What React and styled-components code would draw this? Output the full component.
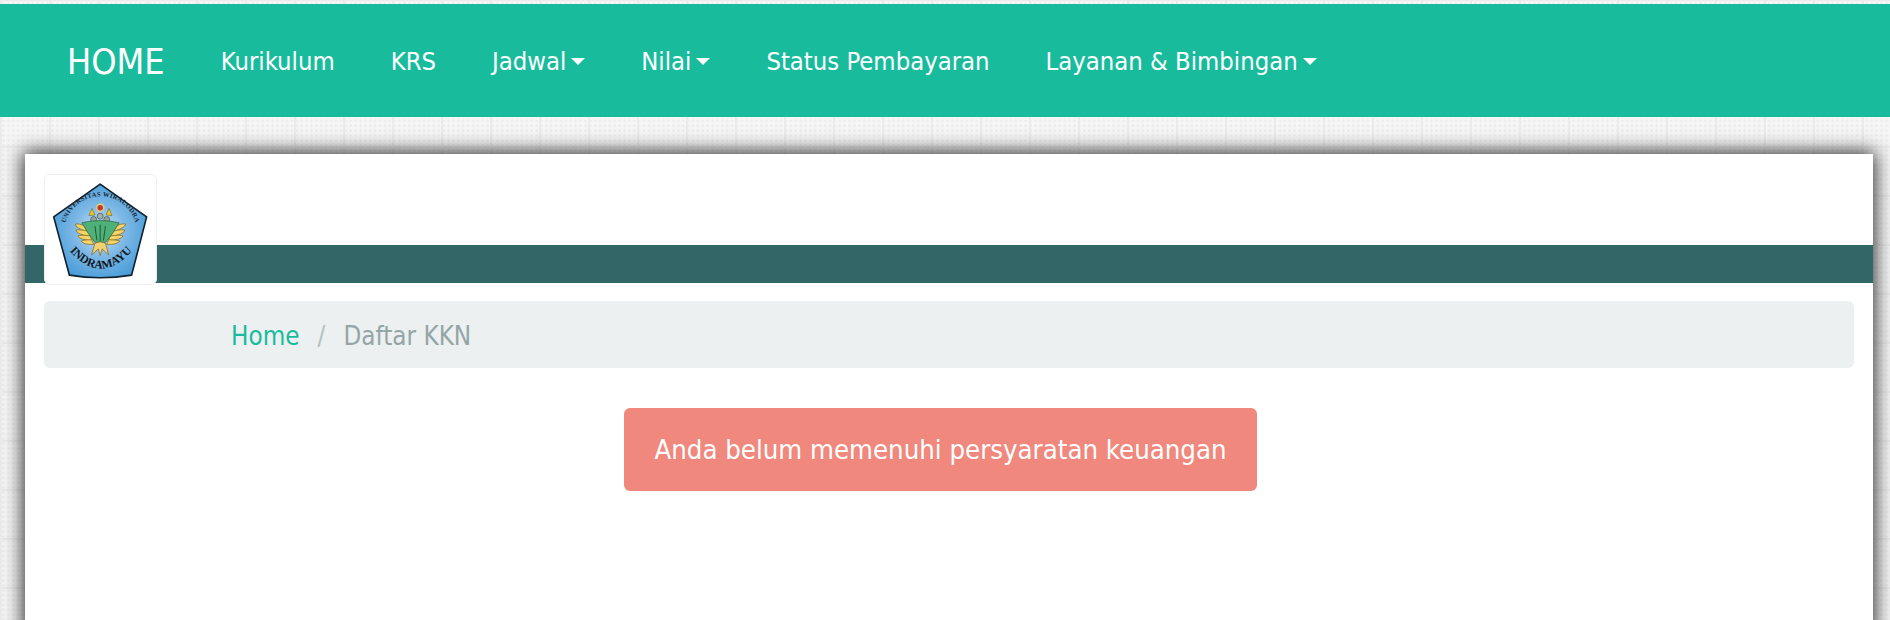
import React from "react";
import styled, { createGlobalStyle } from "styled-components";

const Global = createGlobalStyle`
  html, body { margin: 0; padding: 0; height: 100%; overflow: hidden; }
  body {
    font-family: "DejaVu Sans", "Noto Sans", sans-serif;
    font-stretch: condensed;
    background-color: #f6f6f6;
    background-image:
      linear-gradient(90deg, #ebebeb 0, #ebebeb 2px, transparent 2px),
      linear-gradient(0deg, #ebebeb 0, #ebebeb 2px, transparent 2px),
      radial-gradient(circle, #ececec 1.1px, transparent 1.5px);
    background-size: 49px 49px, 49px 49px, 4.9px 4.9px;
    background-position: 0 0, 0 1px, 1px 1px;
  }
`;

const Page = styled.div`
  padding-top: 4px;
`;

const Navbar = styled.nav`
  display: flex;
  align-items: center;
  height: 113px;
  padding-left: 67px;
  padding-top: 1px;
  box-sizing: border-box;
  background: #18bc9c;
  color: #fff;
`;

const Brand = styled.a`
  font-size: 35.8px;
  margin-right: 28px;
`;

const NavLink = styled.a`
  display: flex;
  align-items: center;
  gap: 5px;
  padding: 0 28px;
  font-size: 25.4px;
`;

const Caret = styled.span`
  width: 0;
  height: 0;
  border-top: 7px solid #fff;
  border-left: 7px solid transparent;
  border-right: 7px solid transparent;
`;

const Card = styled.main`
  position: relative;
  margin: 37px 17px 0 25px;
  min-height: 480px;
  background: #fff;
  box-shadow: 0 0 18px 2px #2c2c2c;
`;

const Header = styled.header`
  padding-top: 91px;
`;

const HeaderBar = styled.div`
  height: 38px;
  background: #336666;
`;

const Logo = styled.div`
  position: absolute;
  left: 19px;
  top: 20px;
  width: 113px;
  height: 111px;
  box-sizing: border-box;
  background: #fff;
  border: 1px solid #ecf0f1;
  border-radius: 6px;
  overflow: hidden;
`;

const Body = styled.div`
  padding: 18px 19px 0;
`;

const Breadcrumb = styled.ol`
  display: flex;
  align-items: center;
  gap: 18px;
  height: 67px;
  box-sizing: border-box;
  margin: 0;
  padding: 3px 0 0 187px;
  list-style: none;
  border-radius: 6px;
  background: #ecf0f1;
  font-size: 25.8px;
  color: #95a5a6;
`;

const Crumb = styled.li`
  color: ${(p) => (p.$link ? "#18bc9c" : "#95a5a6")};
`;

const Separator = styled.li`
  color: #b4c0c1;
`;

const Center = styled.div`
  display: flex;
  justify-content: center;
  margin: 40px 17px 0 0;
`;

const Alert = styled.div`
  display: flex;
  align-items: center;
  height: 83px;
  padding: 0 30px;
  border-radius: 6px;
  background: #f0887e;
  color: #fff;
  font-size: 27.3px;
`;

const Emblem = () => (
  <svg width="111" height="109" viewBox="0 0 338 333">
    <defs>
      <radialGradient id="blue" cx="50%" cy="50%" r="60%">
        <stop offset="0" stopColor="#cfe5f6" />
        <stop offset="0.45" stopColor="#7fb9e6" />
        <stop offset="1" stopColor="#3f97d6" />
      </radialGradient>
      <path id="arcTop" d="M58 176 A110 110 0 0 1 280 176" />
      <path id="arcBottom" d="M66 222 Q170 350 274 222" />
    </defs>
    <path d="M168 28 L310 128 L264 306 Q168 322 74 306 L26 128 Z" fill="url(#blue)" stroke="#10202c" strokeWidth="5" strokeLinejoin="round" />
    <text fontFamily="Liberation Serif, serif" fontWeight="700" fontSize="20" letterSpacing="1" fill="#1b2630">
      <textPath href="#arcTop" startOffset="50%" textAnchor="middle">UNIVERSITAS WIRALODRA</textPath>
    </text>
    <text fontFamily="Liberation Serif, serif" fontWeight="700" fontSize="36" fill="#10161c">
      <textPath href="#arcBottom" startOffset="50%" textAnchor="middle">INDRAMAYU</textPath>
    </text>
    <circle cx="168" cy="100" r="11" fill="#c0392b" stroke="#d9c98a" strokeWidth="5" />
    <path d="M143 102 L152 122 L134 124 Z M195 102 L204 124 L186 122 Z" fill="#f2c81f" stroke="#5d4a10" strokeWidth="1.5" />
    <circle cx="148" cy="136" r="9" fill="#98a59e" stroke="#3f4a45" strokeWidth="2" />
    <circle cx="168" cy="126" r="9" fill="#a4b0aa" stroke="#3f4a45" strokeWidth="2" />
    <circle cx="188" cy="136" r="9" fill="#98a59e" stroke="#3f4a45" strokeWidth="2" />
    <g fill="#f5d468" stroke="#7a5a12" strokeWidth="2">
      <path d="M132 160 Q100 146 92 150 Q92 162 132 174 Z" />
      <path d="M136 172 Q100 166 94 168 Q96 182 138 188 Z" />
      <path d="M138 186 Q106 182 100 186 Q104 198 142 200 Z" />
      <path d="M142 198 Q116 198 110 202 Q118 214 148 212 Z" />
      <path d="M204 160 Q236 146 246 150 Q244 162 204 174 Z" />
      <path d="M200 172 Q236 166 244 168 Q240 182 198 188 Z" />
      <path d="M198 186 Q230 182 238 186 Q232 198 194 200 Z" />
      <path d="M194 198 Q220 198 228 202 Q218 214 188 212 Z" />
    </g>
    <path d="M112 146 Q168 132 226 146 Q206 182 184 206 L152 206 Q132 182 112 146 Z" fill="#4fb078" stroke="#1d5a3a" strokeWidth="2" />
    <path d="M152 156 L158 200 M168 152 L168 204 M184 156 L178 200" stroke="#1d5a3a" strokeWidth="3" fill="none" />
    <path d="M152 208 L168 204 L184 208 L194 244 L174 226 L168 246 L162 226 L142 244 Z" fill="#f1d174" stroke="#7a5a12" strokeWidth="2" />
  </svg>
);

export default function App() {
  return (
    <Page>
      <Global />
      <Navbar>
        <Brand>HOME</Brand>
        <NavLink>Kurikulum</NavLink>
        <NavLink>KRS</NavLink>
        <NavLink>Jadwal<Caret /></NavLink>
        <NavLink>Nilai<Caret /></NavLink>
        <NavLink>Status Pembayaran</NavLink>
        <NavLink>Layanan &amp; Bimbingan<Caret /></NavLink>
      </Navbar>
      <Card>
        <Header>
          <HeaderBar />
        </Header>
        <Logo><Emblem /></Logo>
        <Body>
          <Breadcrumb>
            <Crumb $link>Home</Crumb>
            <Separator>/</Separator>
            <Crumb>Daftar KKN</Crumb>
          </Breadcrumb>
          <Center>
            <Alert>Anda belum memenuhi persyaratan keuangan</Alert>
          </Center>
        </Body>
      </Card>
    </Page>
  );
}
